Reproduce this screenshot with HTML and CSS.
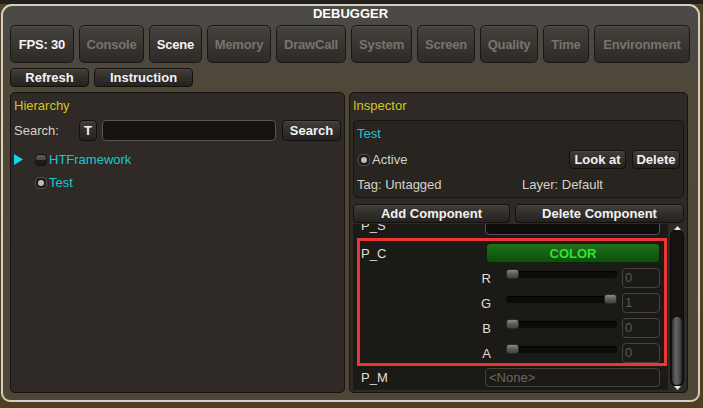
FILE: index.html
```html
<!DOCTYPE html>
<html lang="en">
<head>
<meta charset="utf-8">
<title>Debugger</title>
<link rel="stylesheet" href="styles.css">
</head>
<body>
<div class="window">
  <div class="title">DEBUGGER</div>
  <div class="tabs">
    <button class="tab active tab-fps">FPS: 30</button>
    <button class="tab tab-console">Console</button>
    <button class="tab active tab-scene">Scene</button>
    <button class="tab tab-memory">Memory</button>
    <button class="tab tab-drawcall">DrawCall</button>
    <button class="tab tab-system">System</button>
    <button class="tab tab-screen">Screen</button>
    <button class="tab tab-quality">Quality</button>
    <button class="tab tab-time">Time</button>
    <button class="tab tab-env">Environment</button>
  </div>
  <div class="toolbar">
    <button class="btn btn-refresh">Refresh</button>
    <button class="btn btn-instruction">Instruction</button>
  </div>
  <div class="panels">
    <section class="panel hierarchy">
      <div class="panel-title">Hierarchy</div>
      <div class="search-row">
        <span class="label search-label">Search:</span>
        <button class="btn btn-t">T</button>
        <div class="textfield"></div>
        <button class="btn btn-search">Search</button>
      </div>
      <div class="tree">
        <div class="tree-row">
          <svg class="foldout" width="9" height="11" viewBox="0 0 9 11"><polygon points="0,0 9,5.5 0,11" fill="#17d4e8"/></svg>
          <span class="toggle"></span>
          <span class="node">HTFramework</span>
        </div>
        <div class="tree-row child">
          <span class="toggle on"></span>
          <span class="node">Test</span>
        </div>
      </div>
    </section>
    <section class="panel inspector">
      <div class="panel-title">Inspector</div>
      <div class="obj-box">
        <div class="obj-name">Test</div>
        <div class="obj-row">
          <span class="toggle on"></span>
          <span class="label active-label">Active</span>
          <button class="btn btn-lookat">Look at</button>
          <button class="btn btn-delete">Delete</button>
        </div>
        <div class="obj-row">
          <span class="label tag">Tag: Untagged</span>
          <span class="label">Layer: Default</span>
        </div>
      </div>
      <div class="comp-buttons">
        <button class="btn btn-add">Add Component</button>
        <button class="btn btn-del">Delete Component</button>
      </div>
      <div class="scroll-row">
        <div class="scroll-view">
          <div class="scroll-content">
            <div class="prop-row">
              <span class="prop-label">P_S</span>
              <div class="field dark-field"></div>
            </div>
            <div class="highlight">
              <div class="prop-row">
                <span class="prop-label">P_C</span>
                <button class="color-btn">COLOR</button>
              </div>
              <div class="channel-row">
                <span class="ch-label">R</span>
                <div class="slider"><span class="thumb" style="--v:0"></span></div>
                <div class="num">0</div>
              </div>
              <div class="channel-row">
                <span class="ch-label">G</span>
                <div class="slider"><span class="thumb" style="--v:1"></span></div>
                <div class="num">1</div>
              </div>
              <div class="channel-row">
                <span class="ch-label">B</span>
                <div class="slider"><span class="thumb" style="--v:0"></span></div>
                <div class="num">0</div>
              </div>
              <div class="channel-row">
                <span class="ch-label">A</span>
                <div class="slider"><span class="thumb" style="--v:0"></span></div>
                <div class="num">0</div>
              </div>
            </div>
            <div class="prop-row last">
              <span class="prop-label">P_M</span>
              <div class="field none-field">&lt;None&gt;</div>
            </div>
          </div>
        </div>
        <div class="scrollbar">
          <svg class="arrow" width="7" height="4" viewBox="0 0 7 4"><polygon points="0,4 3.5,0 7,4" fill="#e8e8e8"/></svg>
          <div class="track"><div class="sb-thumb"></div></div>
          <svg class="arrow" width="7" height="4" viewBox="0 0 7 4"><polygon points="0,0 7,0 3.5,4" fill="#e8e8e8"/></svg>
        </div>
      </div>
    </section>
  </div>
</div>
</body>
</html>
```
FILE: styles.css
```css
* { box-sizing: border-box; margin: 0; }
html, body { width: 703px; height: 408px; overflow: hidden; }
body {
  background: linear-gradient(#22201d 0, #22201d 4px, #544529 4px, #4e3f22 100%);
  padding: 4px 0 0 1px;
  font-family: "Liberation Sans", Arial, sans-serif;
  font-size: 13px;
  color: #d6d2ca;
}
button {
  font-family: inherit;
  font-size: 13px;
  font-weight: bold;
  color: #f2f2f2;
  padding: 0;
  white-space: nowrap;
}
.window {
  width: 699px;
  height: 398px;
  border: 2px solid #d4cfc4;
  border-radius: 11px 11px 9px 9px;
  background: linear-gradient(#4c4a45 0, #4b4842 40px, #4f4738 78px, #4e4636 100%);
  padding: 0 7px;
}
.title {
  height: 19px;
  line-height: 15px;
  text-align: center;
  font-weight: bold;
  color: #ffffff;
}
.tabs { display: flex; gap: 5px; height: 38px; }
.tab {
  height: 38px;
  flex: none;
  text-align: center;
  border: 1px solid #1a1816;
  border-radius: 5px;
  background: linear-gradient(#46423d, #2d2a27);
  box-shadow: inset 0 1px 0 rgba(255,255,255,0.07);
  color: #78746d;
  letter-spacing: -0.2px;
}
.tab.active { color: #f4f4f4; }
.tab-fps { width: 64px; }
.tab-console { width: 65px; }
.tab-scene { width: 53px; }
.tab-memory { width: 64px; }
.tab-drawcall { width: 70px; }
.tab-system { width: 61px; }
.tab-screen { width: 58px; }
.tab-quality { width: 58px; }
.tab-time { width: 46px; }
.tab-env { width: 96px; }
.btn {
  border: 1px solid #121110;
  border-radius: 4px;
  background: linear-gradient(#413d38, #24211f);
  box-shadow: inset 0 1px 0 rgba(255,255,255,0.06);
}
.toolbar { display: flex; gap: 5px; height: 19px; margin-top: 5px; }
.btn-refresh { width: 79px; }
.btn-instruction { width: 99px; }
.panels { display: flex; gap: 4px; height: 301px; margin-top: 5px; }
.panel {
  background: #2f2a25;
  border: 1px solid #161310;
  border-radius: 5px;
  padding: 0 3px;
  display: flex;
  flex-direction: column;
}
.hierarchy { width: 335px; }
.inspector { width: 339px; }
.panel-title { height: 26px; line-height: 26px; color: #d6c51a; }
.search-row { display: flex; align-items: center; height: 21px; margin-top: 1px; }
.search-label { width: 65px; }
.btn-t { width: 18px; height: 21px; }
.textfield {
  flex: 1;
  height: 21px;
  margin: 0 6px 0 5px;
  background: #15130f;
  border: 1px solid #5b5750;
  border-radius: 4px;
}
.btn-search { width: 59px; height: 21px; }
.tree { margin-top: 7px; }
.tree-row { display: flex; align-items: center; height: 23px; }
.tree-row.child { padding-left: 21px; }
.foldout { margin-right: 12px; }
.toggle {
  width: 12px;
  height: 12px;
  border-radius: 4px;
  border: 1px solid #121110;
  background: linear-gradient(#5f5f5f 0, #4a4a4a 45%, #1e1d1b 55%, #1a1917 100%);
  position: relative;
}
.toggle.on { background: #1c1b19; border-color: #545250; }
.toggle.on::after {
  content: "";
  position: absolute;
  left: 2px; top: 2px;
  width: 6px; height: 6px;
  border-radius: 50%;
  background: #bdbdbd;
}
.node { color: #1ac6d6; margin-left: 2px; }
.obj-box {
  height: 78px;
  margin-top: 1px;
  background: #28241f;
  border: 1px solid #171411;
  border-radius: 5px;
  padding: 0 3px;
}
.obj-name { height: 26px; line-height: 26px; color: #1ec3d3; }
.obj-row { display: flex; align-items: center; height: 25px; }
.obj-row > .toggle { margin-left: 1px; }
.active-label { margin-left: 2px; flex: 1; }
.btn-lookat { width: 57px; height: 19px; }
.btn-delete { width: 48px; height: 19px; margin-left: 6px; }
.tag { width: 165px; }
.comp-buttons { display: flex; gap: 5px; height: 19px; margin-top: 6px; }
.btn-add { width: 157px; }
.btn-del { flex: 1; }
.scroll-row { display: flex; gap: 2px; height: 166px; margin-top: 1px; }
.scroll-view { width: 315px; background: #1c1a17; overflow: hidden; }
.scroll-content { margin-top: -9px; padding: 0 1px 0 4px; }
.prop-row { display: flex; align-items: center; height: 20px; padding: 0 7px 0 4px; }
.prop-row.last { height: 19px; margin-top: 2px; }
.prop-label { width: 124px; color: #e2dfda; }
.field {
  flex: 1;
  height: 100%;
  border-radius: 4px;
  border: 1px solid #46423c;
  padding-left: 3px;
  line-height: 17px;
}
.dark-field { background: #0e0d0b; border-color: #57534c; }
.none-field { color: #6b675f; }
.highlight {
  margin-top: 3px;
  border: 3px solid #ec3636;
  padding: 2px 4px 0 1px;
  display: flex;
  flex-direction: column;
  gap: 5px;
}
.highlight .prop-row { padding: 0; }
.highlight .prop-label { width: 125px; }
.color-btn {
  flex: 1;
  height: 20px;
  border: 1px solid #0a2808;
  border-radius: 4px;
  background: linear-gradient(#1f711a, #0d4f0b);
  color: #2ee62e;
}
.channel-row { display: flex; height: 20px; align-items: center; }
.ch-label { width: 130px; text-align: right; color: #e2dfda; }
.slider { position: relative; width: 111px; height: 20px; margin-left: 15px; }
.slider::before {
  content: "";
  position: absolute;
  left: 0; right: 0; top: 3px;
  height: 7px;
  border-radius: 4px;
  background: #0d0c0b;
  box-shadow: inset 0 1px 1px #000;
}
.thumb {
  position: absolute;
  top: 1px;
  left: calc(var(--v) * (100% - 13px));
  width: 13px;
  height: 10px;
  border-radius: 3px;
  background: linear-gradient(#8c8c8c, #5a5a5a 50%, #454545);
  border: 1px solid #2a2a2a;
}
.num {
  width: 38px;
  height: 20px;
  margin-left: 5px;
  border: 1px solid #46423c;
  border-radius: 4px;
  color: #5d5953;
  padding-left: 2px;
  line-height: 18px;
}
.scrollbar {
  width: 14px;
  display: flex;
  flex-direction: column;
  align-items: center;
  padding-top: 2px;
}
.track {
  flex: 1;
  width: 14px;
  margin: -1px 0;
  background: #161411;
  border: 1px solid #0b0a09;
  border-radius: 7px;
  padding: 1px;
  display: flex;
  flex-direction: column;
  justify-content: flex-end;
}
.sb-thumb {
  height: 68px;
  border-radius: 6px;
  background: linear-gradient(to right, #2e2e2e, #646464 35%, #555 65%, #2a2a2a);
}
.arrow { flex: none; position: relative; z-index: 1; }
```
